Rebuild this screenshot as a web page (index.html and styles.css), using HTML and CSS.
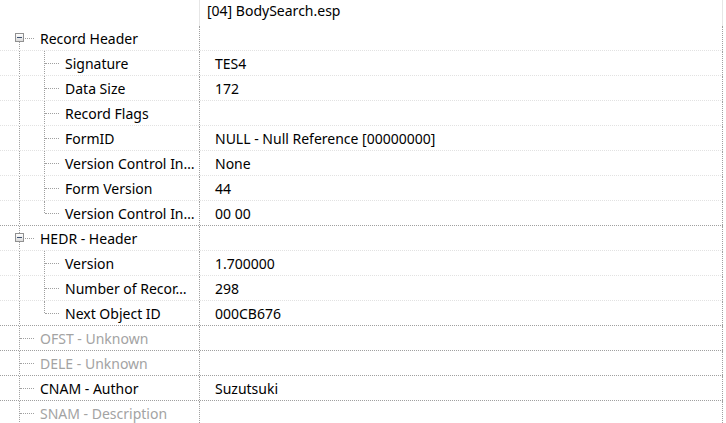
FILE: index.html
```html
<!DOCTYPE html>
<html lang="en">
<head>
  <meta charset="UTF-8">
  <title>BodySearch.esp</title>
  <link rel="stylesheet" href="styles.css">
</head>
<body>

  <div class="tree">
    <div class="head">
      <div class="name"></div>
      <div class="value">[04] BodySearch.esp</div>
    </div>

    <div class="row">
      <div class="name"><span class="lane start"><span class="box"></span></span><span class="label">Record Header</span></div>
      <div class="value"></div>
    </div>
    <div class="row">
      <div class="name"><span class="lane pipe"></span><span class="lane tee"></span><span class="label">Signature</span></div>
      <div class="value">TES4</div>
    </div>
    <div class="row">
      <div class="name"><span class="lane pipe"></span><span class="lane tee"></span><span class="label">Data Size</span></div>
      <div class="value">172</div>
    </div>
    <div class="row">
      <div class="name"><span class="lane pipe"></span><span class="lane tee"></span><span class="label">Record Flags</span></div>
      <div class="value"></div>
    </div>
    <div class="row">
      <div class="name"><span class="lane pipe"></span><span class="lane tee"></span><span class="label">FormID</span></div>
      <div class="value">NULL - Null Reference [00000000]</div>
    </div>
    <div class="row">
      <div class="name"><span class="lane pipe"></span><span class="lane tee"></span><span class="label">Version Control In…</span></div>
      <div class="value">None</div>
    </div>
    <div class="row">
      <div class="name"><span class="lane pipe"></span><span class="lane tee"></span><span class="label">Form Version</span></div>
      <div class="value">44</div>
    </div>
    <div class="row group-end">
      <div class="name"><span class="lane pipe"></span><span class="lane elbow"></span><span class="label">Version Control In…</span></div>
      <div class="value">00 00</div>
    </div>

    <div class="row">
      <div class="name"><span class="lane tee"><span class="box"></span></span><span class="label">HEDR - Header</span></div>
      <div class="value"></div>
    </div>
    <div class="row">
      <div class="name"><span class="lane pipe"></span><span class="lane tee"></span><span class="label">Version</span></div>
      <div class="value">1.700000</div>
    </div>
    <div class="row">
      <div class="name"><span class="lane pipe"></span><span class="lane tee"></span><span class="label">Number of Recor…</span></div>
      <div class="value">298</div>
    </div>
    <div class="row group-end">
      <div class="name"><span class="lane pipe"></span><span class="lane elbow"></span><span class="label">Next Object ID</span></div>
      <div class="value">000CB676</div>
    </div>

    <div class="row group-end">
      <div class="name"><span class="lane tee"></span><span class="label muted">OFST - Unknown</span></div>
      <div class="value"></div>
    </div>
    <div class="row group-end">
      <div class="name"><span class="lane tee"></span><span class="label muted">DELE - Unknown</span></div>
      <div class="value"></div>
    </div>
    <div class="row group-end">
      <div class="name"><span class="lane tee"></span><span class="label">CNAM - Author</span></div>
      <div class="value">Suzutsuki</div>
    </div>
    <div class="row group-end">
      <div class="name"><span class="lane tee"></span><span class="label muted">SNAM - Description</span></div>
      <div class="value"></div>
    </div>
  </div>

</body>
</html>
```

FILE: styles.css
```css
* {
  margin: 0;
  padding: 0;
  box-sizing: border-box;
}

body {
  font-family: 'Noto Sans', 'Open Sans', sans-serif;
  font-size: 14px;
  color: #000;
  background: #fff;
  overflow: hidden;
}

.tree {
  width: 723px;
}

.head,
.row {
  display: flex;
}

.head {
  height: 26px;
}

.row {
  height: 25px;
  border-bottom: 1px dotted #e2e2e2;
}

.row.group-end {
  border-bottom-color: #a0a0a0;
}

.name {
  width: 200px;
  flex: none;
  display: flex;
  align-items: center;
  padding-left: 7px;
  border-right: 1px dotted #a0a0a0;
  white-space: nowrap;
  overflow: hidden;
}

.value {
  flex: 1;
  display: flex;
  align-items: center;
  padding-left: 15px;
  border-right: 1px dotted #a0a0a0;
  white-space: nowrap;
}

.head .name,
.head .value {
  border-right: 1px solid #e6e6e6;
}

.head .value {
  padding-left: 7px;
  padding-top: 1px;
  align-items: flex-start;
}

.label {
  margin-left: 8px;
}

.label.muted {
  color: #a3a3a3;
}

/* tree guide lines */
.lane {
  position: relative;
  width: 25px;
  height: 100%;
  flex: none;
}

.lane + .lane {
  margin-left: 0;
}

.label {
  position: relative;
  top: 0;
}

.lane.pipe::before,
.lane.tee::before,
.lane.elbow::before,
.lane.start::before {
  content: "";
  position: absolute;
  left: 12px;
  top: 0;
  bottom: -1px;
  border-left: 1px dotted #a0a0a0;
}

.lane.elbow::before {
  bottom: auto;
  height: 12px;
}

.lane.start::before {
  top: 12px;
}

.lane.tee::after,
.lane.elbow::after,
.lane.start::after {
  content: "";
  position: absolute;
  left: 13px;
  top: 12px;
  width: 14px;
  border-top: 1px dotted #a0a0a0;
}

.box {
  position: absolute;
  left: 8px;
  top: 7px;
  width: 9px;
  height: 9px;
  border: 1px solid #919191;
  background: linear-gradient(#ffffff, #dcdcdc);
  z-index: 1;
}

.box::after {
  content: "";
  position: absolute;
  left: 1px;
  top: 3px;
  width: 5px;
  height: 1px;
  background: #3d5170;
}
```
